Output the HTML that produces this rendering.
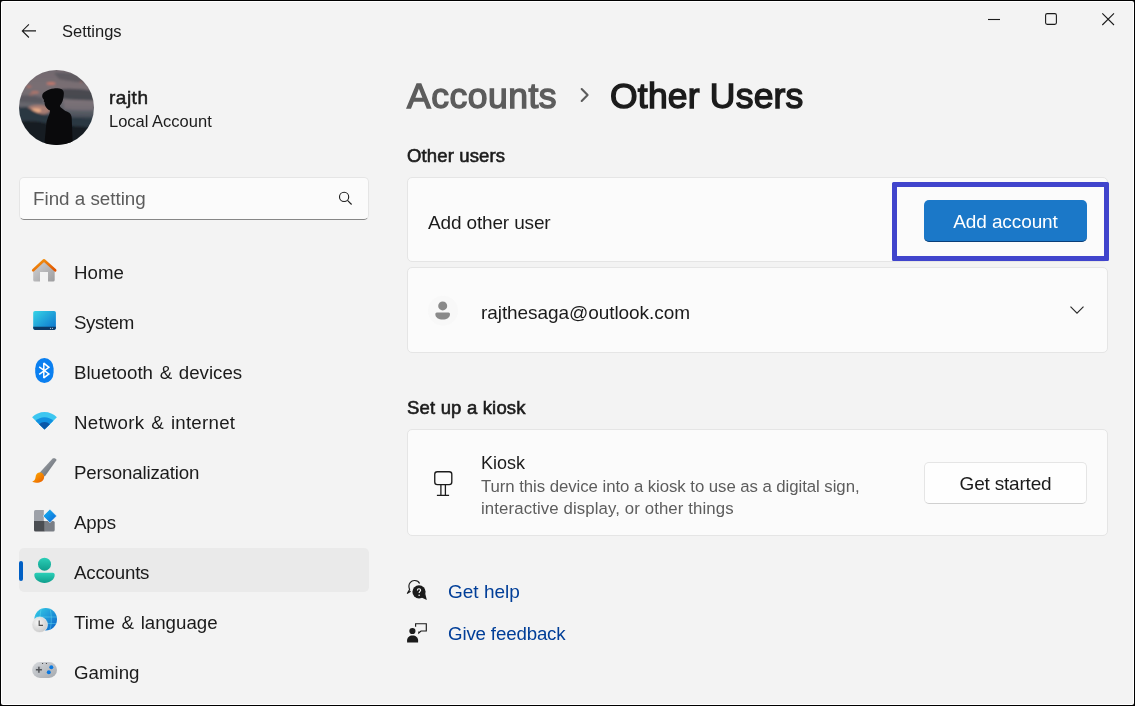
<!DOCTYPE html>
<html><head><meta charset="utf-8">
<style>
*{margin:0;padding:0;box-sizing:border-box}
html,body{width:1135px;height:706px;overflow:hidden;background:#000}
body{font-family:"Liberation Sans",sans-serif;color:#1b1b1b;position:relative}
#win{position:absolute;left:1px;top:1px;width:1133px;height:704px;background:#fff;border-radius:2px}
#bg{position:absolute;left:2px;top:2px;width:1131px;height:702px;background:#f3f3f3;border-radius:1px}
.a{position:absolute;white-space:nowrap;line-height:1;will-change:transform}
svg.a{overflow:visible}
.nav{will-change:transform;position:absolute;left:74px;font-size:18.7px;word-spacing:1.5px;line-height:1;white-space:nowrap;color:#1b1b1b}
.card{position:absolute;left:407px;width:701px;background:#fbfbfb;border:1px solid #e5e5e5;border-radius:5px}
</style></head><body>
<div id="win"></div>
<div id="bg"></div>

<!-- title bar -->
<svg class="a" style="left:0;top:0" width="60" height="45"><path d="M36 30.9H22.3M28.9 24.3L22.3 30.9L28.9 37.5" fill="none" stroke="#1b1b1b" stroke-width="1.1"/></svg>
<div class="a" id="t_settings" style="left:62px;top:23px;font-size:16.5px">Settings</div>
<svg class="a" style="left:960px;top:0" width="175" height="40">
<path d="M28 19.5H40" stroke="#1b1b1b" stroke-width="1.1"/>
<rect x="85.6" y="13.6" width="10.8" height="10.8" rx="1.6" fill="none" stroke="#1b1b1b" stroke-width="1.1"/>
<path d="M142.3 13.3L154 25M154 13.3L142.3 25" stroke="#1b1b1b" stroke-width="1.1"/>
</svg>

<!-- avatar -->
<svg class="a" style="left:19px;top:70px" width="75" height="75" viewBox="0 0 75 75">
<defs>
<filter id="bl" x="-10%" y="-10%" width="120%" height="120%"><feGaussianBlur stdDeviation="1.3"/></filter>
<clipPath id="cc"><circle cx="37.5" cy="37.5" r="37.5"/></clipPath>
<linearGradient id="sky" x1="0" y1="0" x2="0" y2="1">
<stop offset="0" stop-color="#6f676d"/><stop offset="0.25" stop-color="#7a6f74"/><stop offset="0.42" stop-color="#6d6a70"/><stop offset="0.55" stop-color="#5a5d66"/><stop offset="0.7" stop-color="#2e3a46"/><stop offset="1" stop-color="#0c0f12"/>
</linearGradient>
<radialGradient id="glow" cx="0.22" cy="0.5" r="0.3"><stop offset="0" stop-color="#f0a878"/><stop offset="0.5" stop-color="#b87a6a" stop-opacity="0.7"/><stop offset="1" stop-color="#6a6a70" stop-opacity="0"/></radialGradient>
</defs>
<g clip-path="url(#cc)">
<g filter="url(#bl)">
<rect x="-5" y="-5" width="85" height="85" fill="url(#sky)"/>
<path d="M0 26 Q12 24 24 28 L24 33 Q12 33 0 32z" fill="#4c4d55" opacity="0.6"/>
<path d="M42 19 Q58 18 75 21 L75 30 Q58 31 42 28z" fill="#3a3e46" opacity="0.75"/>
<path d="M45 30 Q60 29 75 31 L75 40 Q60 41 45 39z" fill="#8a7a80" opacity="0.5"/>
<path d="M35 3 Q52 2 75 8 L75 14 Q55 12 40 9z" fill="#4f4e55" opacity="0.6"/>
<ellipse cx="32" cy="13.5" rx="4.5" ry="1.2" fill="#d87a68" opacity="0.85"/>
<ellipse cx="10" cy="16.6" rx="2.5" ry="1.2" fill="#c87060" opacity="0.7"/>
<ellipse cx="16" cy="22.4" rx="4" ry="1.3" fill="#c87868" opacity="0.7"/>
<ellipse cx="12" cy="24.6" rx="2.5" ry="0.9" fill="#b87060" opacity="0.6"/>
<ellipse cx="62" cy="12.2" rx="1.6" ry="0.8" fill="#c87060" opacity="0.6"/>
<ellipse cx="19" cy="40" rx="12" ry="5" fill="#c88a78" opacity="0.7"/>
<ellipse cx="17" cy="40.5" rx="5" ry="2.2" fill="#f0b088" opacity="0.9"/>
<path d="M-5 37.7 L4 37.2 L8 37 Q11 38.5 14.7 41 L19 43 L23.8 44.5 L35 46 L50 47.5 L80 48 L80 80 L-5 80z" fill="#2c3842"/>
<path d="M-5 52 Q15 49 30 54 L80 58 L80 80 L-5 80z" fill="#161c21" opacity="0.9"/>
</g>
<path d="M35.1 18.4 C38.5 18.2 42 18.8 43.2 19.6 C44.6 21 45 22.5 44.8 24.2 C44.6 27 44.2 29 43.6 31 C42.8 33 41.8 34.5 40.9 35.5 L41.3 37.1 C43 38.4 44.6 40 46.4 41 C48.6 41.8 50.2 42.5 51 43.4 C52.2 44.8 52.6 46.2 52.7 48 L53.2 61.5 L53.8 78 L25.3 78 L25.5 75 C25.8 70 26.2 65 26.6 61.5 C27 57 27.3 54 27.7 51.3 C28.8 47.5 30 45 30.6 43.3 L31.1 40.5 C29.8 40 28.9 39.5 28.3 38.8 C27.3 37.5 26.6 36.5 26.1 35.4 C25.6 34 25.6 33 25.5 32 L24.7 31.4 C25 30.6 24.9 30 24.9 29.7 C23.9 28.5 23 27 23.2 25.8 C23.3 24.2 24.2 22.8 26 21.8 C28.6 19.6 31.8 18.6 35.1 18.4z" fill="#0a0a0c"/>
</g>
</svg>
<div class="a" id="t_rajth" style="left:109px;top:88px;font-size:19px;-webkit-text-stroke:0.5px #1b1b1b;letter-spacing:0.5px">rajth</div>
<div class="a" id="t_local" style="left:109px;top:113px;font-size:16.5px">Local Account</div>

<!-- search -->
<div class="a" style="left:19px;top:177px;width:350px;height:43px;background:#fbfbfb;border:1px solid #e5e5e5;border-bottom:1px solid #868686;border-radius:5px"></div>
<div class="a" id="t_find" style="left:33px;top:190px;font-size:18.8px;color:#5c5c5c">Find a setting</div>
<svg class="a" style="left:325px;top:180px" width="50" height="45"><circle cx="19.1" cy="16.9" r="4.6" fill="none" stroke="#1b1b1b" stroke-width="1.1"/><path d="M22.5 20.4L26.6 24.5" stroke="#1b1b1b" stroke-width="1.1"/></svg>

<!-- nav -->
<div class="a" style="left:19px;top:548px;width:350px;height:44px;background:#eaeaea;border-radius:5px"></div>
<div class="a" style="left:19px;top:561px;width:3.5px;height:20px;background:#005fc4;border-radius:2px"></div>

<!-- icons -->
<svg class="a" style="left:25px;top:255px" width="40" height="40">
<defs><linearGradient id="hg" x1="0" y1="0" x2="1" y2="1"><stop offset="0" stop-color="#d4d4d6"/><stop offset="1" stop-color="#9c9c9e"/></linearGradient>
<linearGradient id="ho" x1="0" y1="0" x2="1" y2="1"><stop offset="0" stop-color="#f59a10"/><stop offset="1" stop-color="#e05200"/></linearGradient></defs>
<path d="M8.2 15.5L19 5.5L29.7 15.5V25A1.6 1.6 0 0 1 28.1 26.6H23V17H15V26.6H9.8A1.6 1.6 0 0 1 8.2 25z" fill="url(#hg)"/>
<path d="M8.2 15.3L19 5.3L30.2 15.3" fill="none" stroke="url(#ho)" stroke-width="2.6" stroke-linecap="round" stroke-linejoin="round"/>
</svg>
<svg class="a" style="left:25px;top:305px" width="40" height="40">
<defs><linearGradient id="sg" x1="0" y1="0" x2="1" y2="1"><stop offset="0" stop-color="#36d4e6"/><stop offset="1" stop-color="#0a70cc"/></linearGradient></defs>
<rect x="8.2" y="5.9" width="22.7" height="19" rx="1.8" fill="url(#sg)"/>
<path d="M8.2 21.8H30.9V23.1A1.8 1.8 0 0 1 29.1 24.9H10A1.8 1.8 0 0 1 8.2 23.1z" fill="#0c3a66"/>
<circle cx="25.5" cy="23.3" r="0.6" fill="#bcd"/><circle cx="27.5" cy="23.3" r="0.6" fill="#bcd"/>
</svg>
<svg class="a" style="left:25px;top:355px" width="40" height="40">
<rect x="10.2" y="2.9" width="18.4" height="25.1" rx="9.2" ry="10.5" fill="#0a7ff0"/>
<path d="M14.2 11.8L23.9 18.9L18.8 22.9V8.1L23.9 12.3L14.2 19.4" fill="none" stroke="#fff" stroke-width="1.5" stroke-linejoin="miter" stroke-miterlimit="2"/>
</svg>
<svg class="a" style="left:25px;top:405px" width="40" height="40">
<path d="M19.5 24.6L7.1 12.2A17.5 17.5 0 0 1 31.9 12.2z" fill="#3cc6f0"/>
<path d="M19.5 24.6L10.7 15.8A12.4 12.4 0 0 1 28.3 15.8z" fill="#1190e0"/>
<path d="M19.5 24.6L14.1 19.2A7.6 7.6 0 0 1 24.9 19.2z" fill="#0a58a8"/>
</svg>
<svg class="a" style="left:25px;top:455px" width="40" height="40">
<defs><linearGradient id="pg" x1="0" y1="0" x2="1" y2="1"><stop offset="0" stop-color="#a8adb3"/><stop offset="1" stop-color="#5c6168"/></linearGradient>
<linearGradient id="po" x1="0" y1="0" x2="1" y2="1"><stop offset="0" stop-color="#ffb000"/><stop offset="1" stop-color="#e85a00"/></linearGradient></defs>
<path d="M27.6 3.6C29 2.9 31.2 3.6 31.6 5L19.8 21.6L14.6 17.8z" fill="url(#pg)"/>
<path d="M14.2 17.6C17.2 17.3 19.4 19.5 19.1 22.5C18.8 26 15 28 11 27.8C9.5 27.7 8 27.2 7.3 26.6C9 26 10.2 24.8 10.5 22.5C10.8 19.8 12 17.8 14.2 17.6z" fill="url(#po)"/>
</svg>
<svg class="a" style="left:25px;top:505px" width="40" height="40">
<defs><linearGradient id="ad" x1="0" y1="0" x2="1" y2="1"><stop offset="0" stop-color="#19b8f0"/><stop offset="1" stop-color="#0a64d8"/></linearGradient></defs>
<path d="M10.5 5.1H18.8V16.1H9V6.6A1.5 1.5 0 0 1 10.5 5.1z" fill="#9da1a8"/>
<path d="M9 16.1H19.8V26.6H10.5A1.5 1.5 0 0 1 9 25.1z" fill="#4a4d52"/>
<path d="M19.8 16.1H28.2A1.5 1.5 0 0 1 29.7 17.6V25.1A1.5 1.5 0 0 1 28.2 26.6H19.8z" fill="#7a7e85"/>
<path d="M24.9 4.2L31.7 11L24.9 17.8L18.1 11z" fill="url(#ad)" stroke="#f3f3f3" stroke-width="0.6"/>
</svg>
<svg class="a" style="left:15px;top:552px" width="50" height="40">
<defs><linearGradient id="tg" x1="0" y1="0" x2="0" y2="1"><stop offset="0" stop-color="#2ccfb8"/><stop offset="1" stop-color="#0f9e8c"/></linearGradient></defs>
<circle cx="29.5" cy="12.2" r="6.5" fill="url(#tg)"/>
<path d="M21.3 20.8H37.7Q39.7 20.8 39.7 22.8C39.7 27.6 35 30.9 29.5 30.9C24 30.9 19.3 27.6 19.3 22.8Q19.3 20.8 21.3 20.8z" fill="url(#tg)"/>
</svg>
<svg class="a" style="left:25px;top:605px" width="40" height="40">
<defs><linearGradient id="gg" x1="0" y1="0" x2="1" y2="1"><stop offset="0" stop-color="#35d0e8"/><stop offset="1" stop-color="#0a60c8"/></linearGradient>
<radialGradient id="cg" cx="0.4" cy="0.35" r="0.7"><stop offset="0" stop-color="#f6f6f6"/><stop offset="1" stop-color="#c8c8c8"/></radialGradient></defs>
<circle cx="20.7" cy="14.2" r="11.3" fill="url(#gg)"/>
<path d="M9.4 12H32M9.8 18.5H31.6M16.5 3.5C14.5 8 14.5 20 16.5 25M24.8 3.5C26.8 8 26.8 20 24.8 25" stroke="#6ee0f4" stroke-width="0.7" fill="none" opacity="0.6"/>
<circle cx="14.7" cy="19.8" r="7.8" fill="url(#cg)" stroke="#f3f3f3" stroke-width="0.6"/>
<path d="M14.2 15.4V20.3H18" fill="none" stroke="#505050" stroke-width="1.2"/>
</svg>
<svg class="a" style="left:25px;top:655px" width="40" height="40">
<defs><linearGradient id="cgr" x1="0" y1="0" x2="1" y2="1"><stop offset="0" stop-color="#d6d9dd"/><stop offset="1" stop-color="#a4a8ad"/></linearGradient></defs>
<rect x="7.1" y="7.1" width="24.9" height="15.8" rx="7.9" fill="url(#cgr)"/>
<circle cx="13.9" cy="14.7" r="3.6" fill="#b8bbbf" opacity="0.6"/>
<path d="M13.9 11.7V17.7M10.9 14.7H16.9" stroke="#505358" stroke-width="1.5"/>
<circle cx="26.3" cy="12.2" r="2" fill="#0a78e0"/><circle cx="23.8" cy="17.3" r="2" fill="#0a78e0"/>
<circle cx="17.6" cy="8.5" r="0.6" fill="#333"/><circle cx="21.4" cy="8.5" r="0.6" fill="#333"/>
</svg>

<div class="nav" style="top:264px">Home</div>
<div class="nav" style="top:314px;letter-spacing:-0.4px">System</div>
<div class="nav" style="top:364px">Bluetooth &amp; devices</div>
<div class="nav" style="top:414px;letter-spacing:0.25px">Network &amp; internet</div>
<div class="nav" style="top:464px;letter-spacing:-0.17px">Personalization</div>
<div class="nav" style="top:514px;letter-spacing:-0.2px">Apps</div>
<div class="nav" style="top:564px;letter-spacing:-0.2px">Accounts</div>
<div class="nav" style="top:614px">Time &amp; language</div>
<div class="nav" style="top:664px">Gaming</div>

<!-- main -->
<div class="a" id="t_acc" style="left:407px;top:79px;font-size:35.5px;color:#5c5c5c;-webkit-text-stroke:1.4px #5c5c5c;letter-spacing:0.5px">Accounts</div>
<svg class="a" style="left:570px;top:80px" width="30" height="30"><path d="M11.7 9.1L17.6 15L11.7 20.9" fill="none" stroke="#5c5c5c" stroke-width="2.1" stroke-linecap="round" stroke-linejoin="round"/></svg>
<div class="a" id="t_other" style="left:610px;top:79px;font-size:35.5px;color:#1b1b1b;-webkit-text-stroke:1.4px #1b1b1b;letter-spacing:0.2px">Other Users</div>

<div class="a" id="t_ou" style="left:407px;top:147px;font-size:18.5px;-webkit-text-stroke:0.6px #1b1b1b;letter-spacing:0.14px">Other users</div>
<div class="card" style="top:177px;height:85px"></div>
<div class="a" id="t_addo" style="left:428px;top:213px;font-size:19px;letter-spacing:-0.15px">Add other user</div>
<div class="a" style="left:924px;top:200px;width:163px;height:42px;background:#1b78c8;border-radius:5px;border-bottom:1px solid #0a3e78"></div>
<div class="a" id="t_adda" style="left:924px;top:212px;width:163px;text-align:center;font-size:19px;color:#fff;letter-spacing:-0.1px">Add account</div>
<div class="a" style="left:892px;top:182px;width:217px;height:79px;border:5px solid #4044cc;border-radius:1.5px"></div>

<div class="card" style="top:267px;height:86px"></div>
<svg class="a" style="left:400px;top:255px" width="80" height="80">
<circle cx="43" cy="55.7" r="15" fill="#f8f8f8"/>
<circle cx="42.7" cy="50.9" r="4.5" fill="#8a8a8a"/>
<path d="M35.3 58.9Q35.3 57.4 36.8 57.4H48.5Q50 57.4 50 58.9C50 62.5 46.8 64.5 42.7 64.5C38.6 64.5 35.3 62.5 35.3 58.9z" fill="#8a8a8a"/>
</svg>
<div class="a" id="t_email" style="left:481px;top:303px;font-size:19px;letter-spacing:-0.07px">rajthesaga@outlook.com</div>
<svg class="a" style="left:1040px;top:280px" width="80" height="60"><path d="M30.5 26.6L37 33.1L43.5 26.6" fill="none" stroke="#2b2b2b" stroke-width="1.2"/></svg>

<div class="a" id="t_kio" style="left:407px;top:399px;font-size:18.5px;-webkit-text-stroke:0.6px #1b1b1b;letter-spacing:0.18px">Set up a kiosk</div>
<div class="card" style="top:429px;height:107px"></div>
<svg class="a" style="left:425px;top:460px" width="40" height="40">
<rect x="9.75" y="11.7" width="17.05" height="12.9" rx="2.6" fill="none" stroke="#1b1b1b" stroke-width="1.35"/>
<path d="M15.9 24.6V35.5M20.4 24.6V35.5M11.9 35.4H24.1" fill="none" stroke="#1b1b1b" stroke-width="1.3"/>
</svg>
<div class="a" id="t_kiosk" style="left:481px;top:454px;font-size:18px">Kiosk</div>
<div class="a" id="t_d1" style="left:481px;top:479px;font-size:16.8px;color:#5d5d5d;letter-spacing:-0.06px">Turn this device into a kiosk to use as a digital sign,</div>
<div class="a" id="t_d2" style="left:481px;top:501px;font-size:16.8px;color:#5d5d5d;letter-spacing:0.11px">interactive display, or other things</div>
<div class="a" style="left:924px;top:462px;width:163px;height:42px;background:#fefefe;border:1px solid #e5e5e5;border-bottom-color:#d0d0d0;border-radius:5px"></div>
<div class="a" id="t_gs" style="left:924px;top:474px;width:163px;text-align:center;font-size:19px;letter-spacing:-0.2px">Get started</div>

<!-- help -->
<svg class="a" style="left:400px;top:570px" width="40" height="80">
<path d="M19.6 13.4C18.6 11.2 16.5 10.4 14.3 10.5C11 10.7 8.9 13.4 8.9 16.1C8.9 17.6 9.3 18.7 9.6 19.6L7.4 23.3L10.6 21.2" fill="none" stroke="#1b1b1b" stroke-width="1.15" stroke-linejoin="round"/>
<circle cx="19" cy="21.8" r="6.6" fill="#1b1b1b"/>
<path d="M21.5 27.6L26.8 29.9L25.2 23.4z" fill="#1b1b1b"/>
<path d="M17.4 20.5C17.4 19.4 18.1 18.7 19 18.7C19.9 18.7 20.6 19.3 20.6 20.2C20.6 21.3 19.1 21.5 19.1 23.1" fill="none" stroke="#fff" stroke-width="1.15"/>
<circle cx="19.1" cy="25.3" r="0.75" fill="#fff"/>
<circle cx="12.4" cy="61" r="3.1" fill="#1b1b1b"/>
<path d="M7.1 72.6V70.2C7.1 67.5 9.4 65.4 12.6 65.4C15.8 65.4 18.1 67.5 18.1 70.2V72.6z" fill="#1b1b1b"/>
<path d="M15.6 56.8V53.7H26.3V61H21L18.8 63V61.4" fill="none" stroke="#1b1b1b" stroke-width="1.15"/>
</svg>
<div class="a" id="t_gh" style="left:448px;top:582px;font-size:19px;color:#003e98">Get help</div>
<div class="a" id="t_gf" style="left:448px;top:625px;font-size:18.7px;color:#003e98;letter-spacing:-0.15px">Give feedback</div>
</body></html>
